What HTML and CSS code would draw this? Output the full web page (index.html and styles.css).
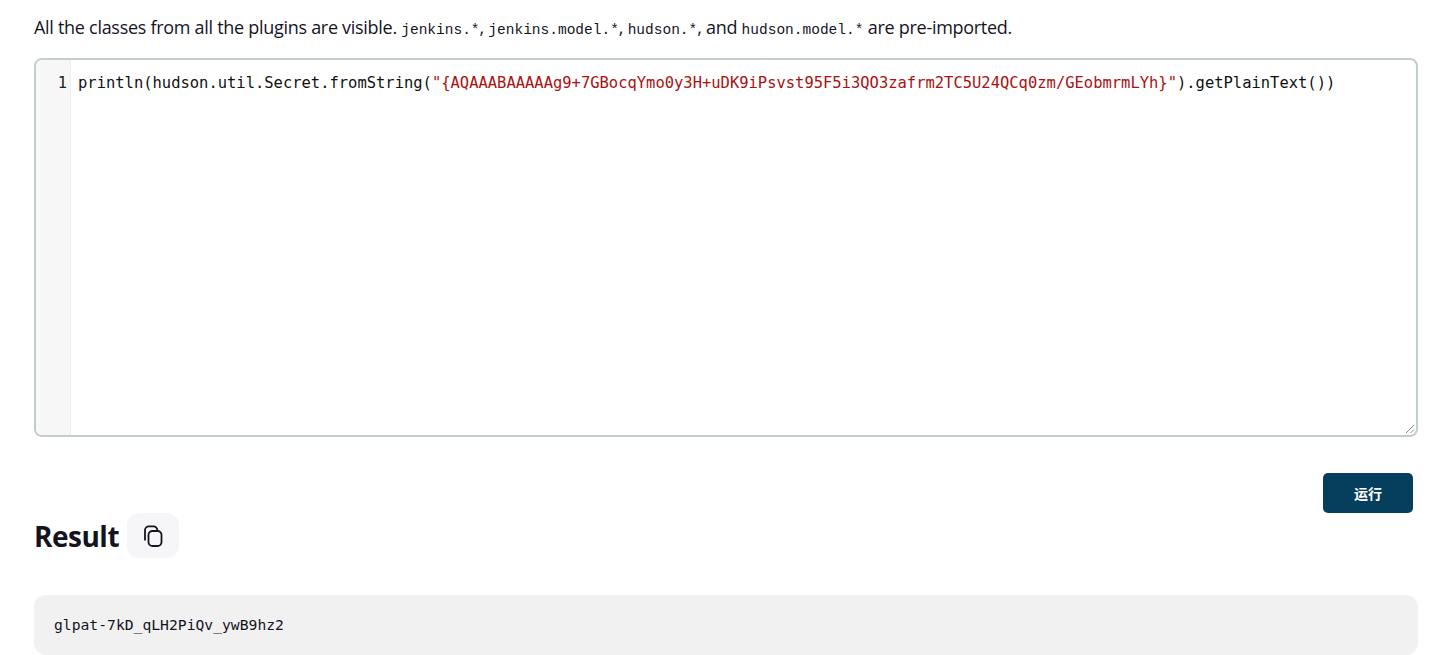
FILE: index.html
```html
<!DOCTYPE html>
<html lang="en">
<head>
<meta charset="utf-8">
<title>Script Console</title>
<link rel="stylesheet" href="styles.css">
</head>
<body>
<main class="page">
  <p class="intro">All the classes from all the plugins are visible. <code>jenkins.*</code>, <code>jenkins.model.*</code>, <code>hudson.*</code>, and <code>hudson.model.*</code> are pre-imported.</p>
  <div class="editor">
    <div class="gutter"><span class="line-no">1</span></div>
    <div class="code-line">println(hudson.util.Secret.fromString(<span class="str">"{AQAAABAAAAAg9+7GBocqYmo0y3H+uDK9iPsvst95F5i3QO3zafrm2TC5U24QCq0zm/GEobmrmLYh}"</span>).getPlainText())</div>
    <svg class="grip" width="10" height="10" viewBox="0 0 10 10"><path d="M1 9 9 1M5.500 9 9 5.500" stroke="#8a8a8a" stroke-width="1" fill="none"/></svg>
  </div>
  <div class="actions"><button class="run">运行</button></div>
  <div class="result-head">
    <h2 class="result-title">Result</h2>
    <button class="copy" aria-label="Copy">
      <svg width="24" height="24" viewBox="0 0 24 24" fill="none" stroke="#14141f" stroke-width="1.800" stroke-linejoin="round"><rect x="7.500" y="7" width="13" height="15" rx="4"/><path d="M4 16.500V6.500C4 4 5.500 2.400 8 2.400H12.500C14.500 2.400 16 3.700 16.500 6.500"/></svg>
    </button>
  </div>
  <pre class="output">glpat-7kD_qLH2PiQv_ywB9hz2</pre>
</main>
</body>
</html>
```
FILE: styles.css
```css
html, body { margin: 0; padding: 0; background: #fff; overflow: hidden; }
body { height: 655px; color: #14141f; font-family: "Open Sans", "Noto Sans", sans-serif; }
.page { padding: 15px 36px 0 34px; }
.intro { margin: 0; font-size: 18px; line-height: 25px; letter-spacing: -0.29px; white-space: nowrap; }
.intro code { font-family: "Liberation Mono", monospace; font-size: 14.500px; letter-spacing: 0; }
.editor { position: relative; display: flex; box-sizing: border-box; height: 379px; margin-top: 15px; border: 2px solid #c3ccd1; border-radius: 8px; overflow: hidden; background: #fff; }
.gutter { flex: none; box-sizing: border-box; width: 35px; padding: 13px 3px 0 0; background: #f7f7f7; border-right: 1px solid #eee; text-align: right; font: 15.480px/20px "DejaVu Sans Mono", monospace; color: #222; }
.code-line { padding: 13px 0 0 7px; font: 15.480px/20px "DejaVu Sans Mono", monospace; color: #111; white-space: pre; }
.str { color: #a11; }
.grip { position: absolute; right: 1px; bottom: 1px; }
.actions { display: flex; justify-content: flex-end; margin-top: 36px; padding-right: 5px; }
.run { width: 90px; height: 40px; border: 0; border-radius: 5px; background: #063f5e; color: #fff; font: 700 14px "Noto Sans CJK SC", sans-serif; }
.result-head { display: flex; align-items: center; gap: 8px; margin-top: 0; }
.result-title { margin: 0; padding-top: 1px; font-size: 28px; line-height: 44px; font-weight: 700; letter-spacing: -0.5px; }
.copy { display: flex; align-items: center; justify-content: center; width: 52px; height: 45px; padding: 0; border: 0; border-radius: 12px; background: #f6f6f8; }
.output { box-sizing: border-box; height: 60px; margin: 37px 0 0; padding: 20px; border-radius: 12px; background: #f1f1f1; font: 14.700px/20px "DejaVu Sans Mono", monospace; color: #14141f; }
```
